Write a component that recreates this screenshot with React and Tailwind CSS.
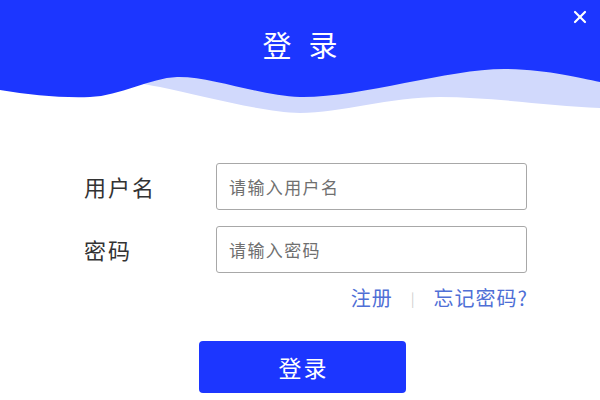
import { X } from 'lucide-react'

// ── Wave header ──────────────────────────────────────────────────────
const Header = () => (
  <div className="relative h-[120px]">
    <svg className="absolute inset-0" width="600" height="120" viewBox="0 0 600 120">
      <path
        d="M130,80 C140,84 150,85 160,87 C200,95 260,112 300,113 C340,113 390,97 440,97 C490,97 550,106 600,108 L600,0 L130,0 Z"
        fill="#d1d9fc"
      />
      <path
        d="M0,90 C30,95 60,98 90,97 C120,96 150,78 177,77 C210,76 260,96 300,97 C360,98 450,68 507,69 C550,70 580,78 600,82 L600,0 L0,0 Z"
        fill="#1c36ff"
      />
    </svg>
    <h1 className="relative pt-[22px] text-center text-[29px] leading-[44px] tracking-[17px] pl-[17px] text-white">
      登录
    </h1>
    <button className="absolute right-[10px] top-[7px] text-white">
      <X size={20} strokeWidth={2.6} />
    </button>
  </div>
)

const Field = ({ label, placeholder, type = 'text', className = '' }) => (
  <div className={`flex items-center ${className}`}>
    <label className="w-[132px] text-[22px] tracking-[2px] text-[#333]">{label}</label>
    <input
      type={type}
      placeholder={placeholder}
      className="w-[311px] h-[47px] rounded-[3px] border border-[#a8a8a8] px-[12px] text-[17px] tracking-[1.4px] text-[#333] placeholder:text-[#6f6f6f] outline-none"
    />
  </div>
)

const App = () => {
  return (
    <div
      className="w-[600px] h-[400px] bg-white overflow-hidden"
      style={{ fontFamily: '"Noto Sans CJK SC", "Noto Sans", sans-serif' }}
    >
      <Header />

      <div className="pl-[84px]">
        <Field label="用户名" placeholder="请输入用户名" className="mt-[43px]" />
        <Field label="密码" placeholder="请输入密码" type="password" className="mt-[16px]" />

        {/* Links */}
        <div className="mt-[12px] w-[443px] flex justify-end items-center text-[20px] leading-[26px] tracking-[1px] text-[#4f6fd6]">
          <a href="#">注册</a>
          <span className="mx-[18px] text-[14px] text-[#cfcfcf]">|</span>
          <a href="#" className="mr-[-1px]">忘记密码?</a>
        </div>
      </div>

      <button className="mt-[30px] ml-[199px] w-[207px] h-[52px] rounded-[4px] bg-[#1c36ff] text-white text-[23px] tracking-[2px] pl-[2px]">
        登录
      </button>
    </div>
  )
}

export default App
